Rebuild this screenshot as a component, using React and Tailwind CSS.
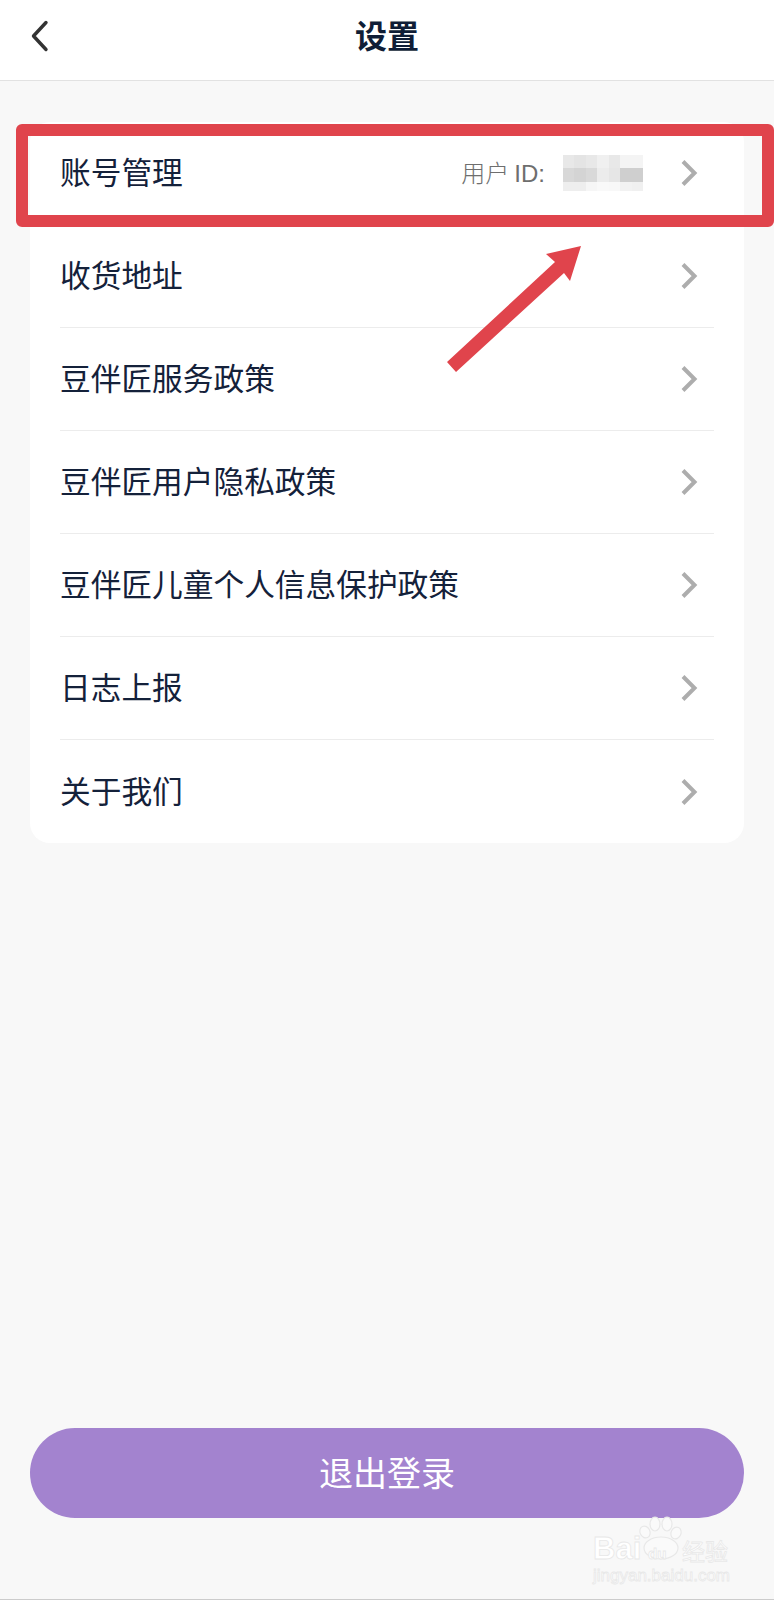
const rows = [
  "账号管理",
  "收货地址",
  "豆伴匠服务政策",
  "豆伴匠用户隐私政策",
  "豆伴匠儿童个人信息保护政策",
  "日志上报",
  "关于我们",
];

// blurred-out user id, one colour per mosaic cell
const mosaic = [
  "#e8e8e8", "#e4e4e4", "#e8e8e8", "#f0f0f0", "#e8e8e8", "#f4f4f4", "#f4f4f4",
  "#d8d8d8", "#d4d4d4", "#d9d9d9", "#ececec", "#e6e6e6", "#cfcfcf", "#cfcfcf",
  "#eeeeee", "#eeeeee", "#f6f6f6", "#f9f9f9", "#f8f8f8", "#f2f2f2", "#f0f0f0",
];

const Mosaic = () => (
  <div className="grid grid-cols-7 grid-rows-[13px_14px_9px] w-[80px] h-[36px] ml-[18px]">
    {mosaic.map((color, i) => (
      <div key={i} style={{ backgroundColor: color }} />
    ))}
  </div>
);

const Chevron = () => (
  <svg className="ml-[36px] mr-[15px]" width="20" height="28" viewBox="0 0 20 28" fill="none" stroke="#adadad" strokeWidth="4">
    <path d="M4 2.5 L15.5 14 L4 25.5" />
  </svg>
);

const Row = ({ label, last, children }) => (
  <div className={`h-[103px] mx-[30px] flex items-center ${last ? "" : "border-b border-[#ececec]"}`}>
    <span className="text-[30.7px] text-[#14213a] pb-[3px]">{label}</span>
    <div className="ml-auto flex items-center">
      {children}
      <Chevron />
    </div>
  </div>
);

const Watermark = () => (
  <div className="absolute left-[590px] top-[1516px] w-[150px] h-[70px] text-white font-['Liberation_Sans',sans-serif] [-webkit-text-stroke:0.8px_#e8e8e8] pointer-events-none">
    <svg className="absolute left-[46px] top-0" width="48" height="46" viewBox="0 0 48 46" fill="#fafafa" stroke="#e8e8e8" strokeWidth="1.2">
      <ellipse cx="9" cy="16" rx="5" ry="6" transform="rotate(-25 9 16)" />
      <ellipse cx="19" cy="8" rx="5" ry="7" />
      <ellipse cx="31" cy="8" rx="5" ry="7" />
      <ellipse cx="40" cy="17" rx="5" ry="6" transform="rotate(25 40 17)" />
      <ellipse cx="25" cy="32" rx="17" ry="11" />
    </svg>
    <span className="absolute left-[3px] top-[16px] text-[31px] leading-[34px] font-bold">Bai</span>
    <span className="absolute left-[58px] top-[29px] text-[15px] leading-[18px] font-bold">du</span>
    <span className="absolute left-[92px] top-[20px] text-[23px] leading-[28px] font-['Noto_Sans_CJK_SC',sans-serif]">经验</span>
    <span className="absolute left-[3px] top-[50px] text-[17px] leading-[20px] whitespace-nowrap">jingyan.baidu.com</span>
  </div>
);

export default function App() {
  return (
    <div className="relative w-[774px] h-[1600px] bg-[#f8f8f8] flex flex-col border-b border-[#cccccc] overflow-hidden font-['Noto_Sans_CJK_SC','Noto_Sans',sans-serif]">
      <header className="relative h-[81px] shrink-0 bg-white border-b border-[#e2e2e2] flex items-center justify-center pb-[13px]">
        <svg className="absolute left-[28px] top-[18px]" width="24" height="36" viewBox="0 0 24 36" fill="none" stroke="#333333" strokeWidth="3.4" strokeLinecap="round" strokeLinejoin="round">
          <path d="M18 4.5 L5.5 18 L18 31.5" />
        </svg>
        <h1 className="text-[32px] font-bold text-[#0f1d36]">设置</h1>
      </header>

      <div className="mx-[30px] mt-[41px] bg-white rounded-[20px]">
        {rows.map((label, i) => (
          <Row key={label} label={label} last={i === rows.length - 1}>
            {i === 0 && (
              <>
                <span className="text-[24px] text-[#6e6e6e] font-light whitespace-nowrap">
                  用户<span className="ml-[5px] font-['Liberation_Sans',sans-serif]">ID:</span>
                </span>
                <Mosaic />
              </>
            )}
          </Row>
        ))}
      </div>

      <button className="mt-auto mb-[81px] mx-[30px] h-[90px] rounded-[45px] bg-[#a383cf] text-white text-[34px] pb-[4px]">
        退出登录
      </button>

      {/* annotation drawn over the screenshot */}
      <div className="absolute left-[16px] top-[124px] w-[758px] h-[103px] border-[12px] border-[#e0444c] rounded-[6px] pointer-events-none" />
      <svg className="absolute left-0 top-0 pointer-events-none" width="774" height="400" fill="#e0444c">
        <polygon points="447,362 456,372 564,273 570,281 581,246 546,254 555,262" />
      </svg>

      <Watermark />
    </div>
  );
}
